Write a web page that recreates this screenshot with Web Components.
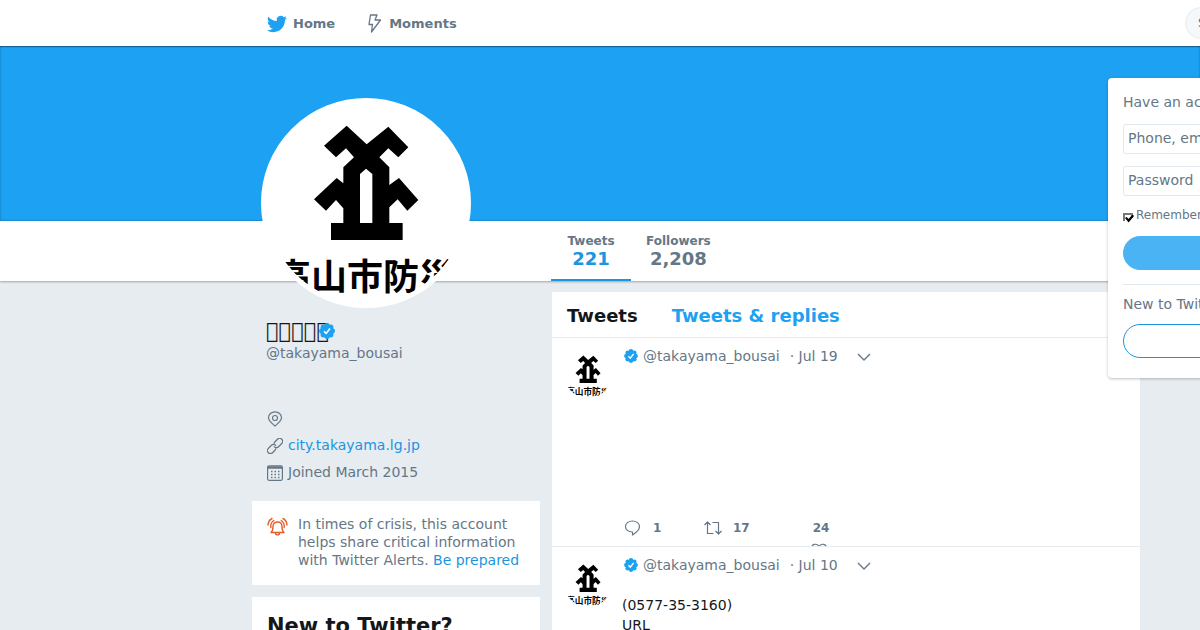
<!DOCTYPE html>
<html lang="en">
<head>
<meta charset="utf-8">
<meta name="viewport" content="width=device-width, initial-scale=1">
<title>@takayama_bousai</title>
<style>
:root {
  --blue: #1da1f2; --link: #1b95e0; --grey: #657786; --ink: #14171a;
  --line: #e6ecf0; --gutter: 21vw; --edge: 5vw;
}
body {
  margin: 0; background: #e6ecf0; color: var(--ink); overflow-x: hidden;
  font: 14px/20px "DejaVu Sans", sans-serif;
}
</style>
</head>
<body>
<profile-page></profile-page>
<script>
const define = (name, html) => {
  const tpl = document.createElement('template');
  tpl.innerHTML = html;
  customElements.define(name, class extends HTMLElement {
    constructor() {
      super();
      this.attachShadow({ mode: 'open' }).append(tpl.content.cloneNode(true));
    }
  });
};

define('city-avatar', `
<style>
  :host { display: block; width: var(--size, 48px); height: var(--size, 48px); border-radius: 50%; background: #fff; overflow: hidden; }
  svg { display: block; width: 100%; height: 100%; }
  text { font: 700 36px "Noto Sans CJK JP", sans-serif; }
</style>
<svg viewBox="0 0 200 200" role="img" aria-label="Takayama City emblem">
  <path fill-rule="evenodd" transform="scale(.33333) translate(-48 -39)" d="M290 107 350 163 415 110 475 172 445 202 415 175 388 202 418 232V285L447 264 505 330 472 362 443 328 418 352V399H458V450H243V399H280V355L258 330 228 362 192 328 260 264 280 280V232L312 202 288 175 258 202 222 167ZM348 236 330 252V399H367V252Z"/>
  <text x="99" y="187" text-anchor="middle">高山市防災</text>
</svg>`);

define('verified-badge', `
<style>:host { display: block; width: var(--badge, 14px); height: var(--badge, 14px); flex: none; } svg { display: block; width: 100%; height: 100%; }</style>
<svg viewBox="0 0 16 16"><g fill="#1da1f2"><circle cx="8" cy="2.8" r="2.7"/><circle cx="8" cy="13.2" r="2.7"/><circle cx="2.8" cy="8" r="2.7"/><circle cx="13.2" cy="8" r="2.7"/><circle cx="4.3" cy="4.3" r="2.7"/><circle cx="11.7" cy="4.3" r="2.7"/><circle cx="4.3" cy="11.7" r="2.7"/><circle cx="11.7" cy="11.7" r="2.7"/><circle cx="8" cy="8" r="5.6"/></g>
<path d="M5 8.3 7.2 10.4 11 5.6" fill="none" stroke="#fff" stroke-width="1.6"/></svg>`);

define('top-bar', `
<style>
  :host { display: flex; align-items: center; height: 46px; background: #fff; padding-left: calc(var(--gutter) + 15px); box-shadow: 0 1px 1px rgba(0,0,0,.3); position: relative; overflow-x: clip; }
  nav { display: flex; gap: 32px; }
  a { display: flex; align-items: center; gap: 6px; color: var(--grey); font-weight: 700; font-size: 13px; text-decoration: none; padding-top: 1px; }
  svg { display: block; }
  input { box-sizing: border-box; width: 220px; height: 32px; margin: 0 -205px 0 auto; padding: 0 12px; border: 1px solid #e6ecf0; border-radius: 16px; background: #f5f8fa; font: 12px "DejaVu Sans", sans-serif; }
  input::placeholder { color: var(--grey); opacity: 1; }
</style>
<nav aria-label="Main">
  <a href="#home"><svg width="20" height="20" viewBox="0 0 24 24" fill="#1da1f2"><path d="M23.95 4.57a10 10 0 0 1-2.82.77 4.96 4.96 0 0 0 2.16-2.72c-.95.55-2 .96-3.13 1.18a4.92 4.92 0 0 0-8.38 4.48C7.69 8.1 4.07 6.13 1.64 3.16a4.82 4.82 0 0 0-.67 2.48c0 1.71.87 3.21 2.19 4.1a4.9 4.9 0 0 1-2.23-.62v.06a4.92 4.92 0 0 0 3.95 4.83 5 5 0 0 1-2.21.08 4.94 4.94 0 0 0 4.6 3.42A9.87 9.87 0 0 1 0 19.54a14 14 0 0 0 7.55 2.21c9.05 0 14-7.5 14-13.98 0-.21 0-.42-.02-.63a9.94 9.94 0 0 0 2.46-2.55z"/></svg>Home</a>
  <a href="#moments"><svg width="16" height="20" viewBox="0 0 16 20" fill="none" stroke="#657786" stroke-width="1.3" stroke-linejoin="round"><path d="M3.500 1H10L8 6H13.500L4.500 18 5.500 10.500H2Z"/></svg>Moments</a>
</nav>
<input type="search" placeholder="Search Twitter" aria-label="Search Twitter">`);

define('profile-banner', `
<style>:host { display: block; height: 175px; background: var(--blue); box-shadow: inset 0 0 2px rgba(0,0,0,.4); }</style>`);

define('profile-stats', `
<style>
  :host { display: flex; position: relative; height: 60px; background: #fff; padding-left: calc(var(--gutter) + 299px); box-shadow: 0 1px 2px rgba(0,0,0,.3); }
  city-avatar { --size: 200px; position: absolute; left: calc(var(--gutter) + 9px); top: -123px; border: 5px solid #fff; }
  a { box-sizing: border-box; min-width: 80px; padding: 12px 15px 0; text-align: center; text-decoration: none; color: var(--grey); font-weight: 700; font-size: 18px; border-bottom: 2px solid transparent; }
  a[aria-current] { border-color: var(--link); }
  a[aria-current] b { color: var(--link); }
  span { display: block; font-size: 12px; line-height: 16px; }
  b { display: block; }
</style>
<city-avatar></city-avatar>
<a href="#tweets" aria-current="page"><span>Tweets</span><b>221</b></a>
<a href="#followers"><span>Followers</span><b>2,208</b></a>`);

define('profile-card', `
<style>
  :host { display: block; padding: 29px 14px 0; color: var(--grey); }
  h1 { display: flex; align-items: center; margin: 0; font: 400 21px/20px "DejaVu Sans", sans-serif; color: var(--ink); }
  verified-badge { --badge: 16px; margin-left: -10px; }
  a { color: var(--link); text-decoration: none; }
  .handle { color: var(--grey); display: block; margin: 2px 0 45px; }
  ul { list-style: none; margin: 0; padding: 0; display: grid; gap: 7px; }
  li { display: flex; align-items: center; gap: 5px; height: 20px; padding-left: 1px; }
  svg { width: 16px; height: 16px; fill: none; stroke: var(--grey); stroke-width: 1.200; margin-top: 2px; }
</style>
<h1><span>&#xE123;&#xE123;&#xE123;&#xE123;&#xE123;</span><verified-badge></verified-badge></h1>
<a class="handle" href="#profile">@takayama_bousai</a>
<ul>
  <li><svg viewBox="0 0 16 16"><path d="M8 15C4.500 12 1.500 9.800 1.500 6.800a6.500 6 0 0 1 13 0C14.500 9.800 11.500 12 8 15Z"/><circle cx="8" cy="7" r="2.500"/></svg></li>
  <li><svg viewBox="0 0 16 16"><g transform="rotate(-45 8 8)"><path d="M7 10.200A3 3 0 0 1 5 11H1.500A3 3 0 0 1 1.500 5H6A3 3 0 0 1 9 8.500"/><path d="M9 5.800A3 3 0 0 1 11 5H14.500A3 3 0 0 1 14.500 11H10A3 3 0 0 1 7 7.500"/></g></svg><a href="#site">city.takayama.lg.jp</a></li>
  <li><svg viewBox="0 0 16 16"><rect x=".6" y=".8" width="14.800" height="14.500" rx="1.500"/><path d="M1 2.500H15" stroke-width="2.500"/><path d="M4 6.500H13M4 9.500H13M4 12.500H13" stroke-width="1.500" stroke-dasharray="1.500 2"/></svg>Joined March 2015</li>
</ul>`);

define('alert-card', `
<style>
  :host { display: flex; gap: 10px; padding: 14px 15px 16px; background: #fff; color: var(--grey); line-height: 18px; }
  svg { flex: none; margin-top: 2px; }
  p { margin: 0; } a { color: var(--link); text-decoration: none; }
</style>
<svg width="21" height="20" viewBox="0 0 21 20" fill="none" stroke="#e0602c" stroke-width="1.400" stroke-linecap="round" stroke-linejoin="round"><path d="M4 15.500C6 14 6 12 6 9.500 6 6.500 8 5 10.500 5S15 6.500 15 9.500C15 12 15 14 17 15.500ZM8.500 16C8.500 18.500 12.500 18.500 12.500 16M3.800 10.500C3.500 7.500 4.500 5 6.800 3.500M1 8C1.200 5 2.800 2.500 5 1.500M17.200 10.500C17.500 7.500 16.500 5 14.200 3.500M20 8C19.800 5 18.200 2.500 16 1.500"/></svg>
<p>In times of crisis, this account helps share critical information with Twitter Alerts. <a href="#alerts">Be prepared</a></p>`);

define('signup-card', `
<style>
  :host { display: block; padding: 16px 15px; background: #fff; }
  h2 { margin: 0; font-size: 21px; line-height: 26px; }
</style>
<h2>New to Twitter?</h2>`);

define('tweet-item', `
<style>
  :host { display: grid; grid-template-columns: 48px 1fr; gap: 10px; box-sizing: border-box; min-height: 209px; padding: 12px; background: #fff; border-top: 1px solid var(--line); }
  .body { display: flex; flex-direction: column; min-width: 0; }
  header { display: flex; align-items: center; height: 12px; padding-left: 2px; color: var(--grey); }
  header a { color: var(--grey); text-decoration: none; white-space: pre; }
  header a:first-of-type { margin: 0 10px 0 5px; }
  button { border: 0; background: none; padding: 0; color: var(--grey); font: 700 12px/16px "DejaVu Sans", sans-serif; display: flex; align-items: center; gap: 12px; }
  header button { margin-left: 19px; }
  svg { fill: none; stroke: var(--grey); stroke-width: 1.200; stroke-linejoin: round; display: block; }
  .text { margin-top: 24px; white-space: pre-line; }
  footer { display: flex; align-items: flex-start; height: 26px; margin-top: auto; padding-left: 2px; overflow: hidden; margin-bottom: -12px; }
  footer button { width: 80px; }
  footer button:nth-child(2) { gap: 11px; }
  footer button:nth-child(3) { display: block; width: 36px; margin-left: 19px; text-align: center; }
  footer button:nth-child(3) svg { margin: 7px 0 0 7px; }
  :host([data-quiet]) footer { display: none; }
</style>
<city-avatar></city-avatar>
<div class="body">
  <header><verified-badge></verified-badge><a href="#profile">@takayama_bousai</a><a href="#tweet">· <slot name="date"></slot></a>
    <button aria-label="More"><svg width="14" height="14" viewBox="0 0 14 14"><path d="M1 5 7 11 13 5" stroke-width="1.400"/></svg></button></header>
  <div class="text"><slot></slot></div>
  <footer>
    <button aria-label="Reply"><svg width="17" height="16" viewBox="0 0 17 16"><path d="M8.500 12C4 12 1.500 9.500 1.500 6.500S4.500 1 8.500 1 15.500 3.500 15.500 6.500C15.500 10 12.500 12.500 8.500 15Z"/></svg><slot name="replies"></slot></button>
    <button aria-label="Retweet"><svg width="18" height="16" viewBox="0 0 18 16"><path d="M.5 5 3.500 2 6.500 5M3.500 2V13.500H9.500M11.500 11 14.500 14 17.500 11M14.500 14V2.500H8.500"/></svg><slot name="retweets"></slot></button>
    <button aria-label="Like"><slot name="likes"></slot><svg width="18" height="15" viewBox="0 0 18 15"><path d="M9 14C4 11 1.500 8.500 1.500 5S6.500-.5 9 3.500C11.500-.5 16.500 1.500 16.500 5S14 11 9 14Z"/></svg></button>
  </footer>
</div>`);

define('tweet-timeline', `
<style>
  :host { display: block; background: #fff; }
  nav { display: flex; align-items: center; gap: 34px; height: 45px; padding-left: 15px; font-size: 18px; font-weight: 700; }
  h2 { margin: 0; font-size: 18px; } a { color: var(--blue); text-decoration: none; }
  nav > * { padding-top: 2px; }
</style>
<nav aria-label="Timeline"><h2>Tweets</h2><a href="#replies">Tweets &amp; replies</a></nav>
<slot></slot>`);

define('signin-menu', `
<style>
  :host { display: block; box-sizing: border-box; width: 290px; padding: 14px 15px 20px; position: absolute; top: 78px; right: -198px; background: #fff; border-radius: 4px; box-shadow: 0 1px 3px rgba(0,0,0,.25); color: var(--grey); }
  form { display: flex; flex-direction: column; }
  p { margin: 0; }
  .field { box-sizing: border-box; height: 30px; margin-top: 12px; padding: 0 4px 2px; border: 1px solid #e1e8ed; border-radius: 3px; font: 14px "DejaVu Sans", sans-serif; }
  .field::placeholder { color: var(--grey); opacity: 1; }
  label { display: flex; align-items: center; gap: 3px; margin: 9px 0 11px; font-size: 12px; }
  .tick { appearance: none; position: relative; width: 10px; height: 8px; margin: 3px 0 0; border: solid #777; border-width: 2px 0 0 2px; background: linear-gradient(#777, #777) right top / 2px 3px no-repeat; }
  .tick:checked::after { content: ""; position: absolute; left: 0; top: 0; width: 9px; height: 8px; background: #000; clip-path: polygon(0 45%, 20% 30%, 38% 55%, 85% 0, 100% 20%, 40% 100%); }
  button { height: 34px; border: 1px solid #4ab3f4; border-radius: 17px; background: #4ab3f4; color: #fff; font: 700 14px "DejaVu Sans", sans-serif; }
  button.line { margin-top: 10px; background: #fff; border-color: var(--link); color: var(--link); }
  .new { margin-top: 14px; border-top: 1px solid #e1e8ed; padding-top: 9px; }
</style>
<form>
  <p>Have an account?</p>
  <input class="field" type="text" placeholder="Phone, email or username" aria-label="Phone, email or username">
  <input class="field" type="password" placeholder="Password" aria-label="Password">
  <label><input class="tick" type="checkbox" checked>Remember me</label>
  <button type="submit">Log in</button>
  <p class="new">New to Twitter?</p>
  <button class="line" type="button">Sign up</button>
</form>`);

define('profile-page', `
<style>
  :host { display: block; position: relative; overflow: clip; height: 100vh; }
  top-bar { z-index: 2; }
  main { display: grid; grid-template-columns: 288px minmax(0, 1fr); gap: 12px; padding: 11px var(--edge) 0 var(--gutter); }
  aside { display: flex; flex-direction: column; gap: 12px; }
  alert-card { margin-top: 7px; }
  signin-menu { z-index: 3; }
</style>
<top-bar></top-bar>
<profile-banner></profile-banner>
<profile-stats></profile-stats>
<main>
  <aside><profile-card></profile-card><alert-card></alert-card><signup-card></signup-card></aside>
  <tweet-timeline>
    <tweet-item><span slot="date">Jul 19</span><span slot="replies">1</span><span slot="retweets">17</span><span slot="likes">24</span></tweet-item>
    <tweet-item data-quiet><span slot="date">Jul 10</span>(0577-35-3160)<br>URL</tweet-item>
  </tweet-timeline>
</main>
<signin-menu></signin-menu>`);
</script>
</body>
</html>
